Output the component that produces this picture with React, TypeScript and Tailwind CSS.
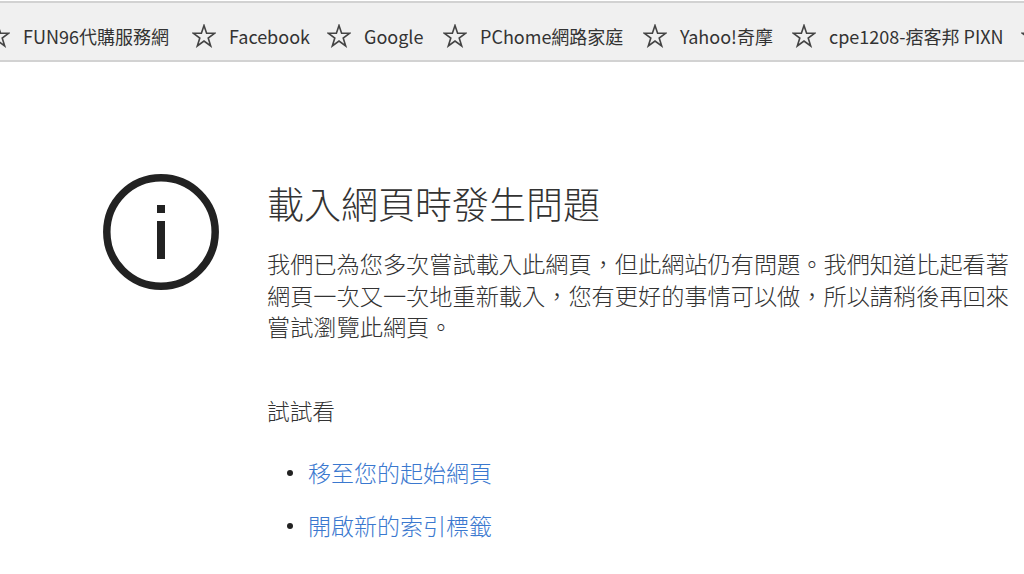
const bookmarks = [
  { label: 'FUN96代購服務網', width: 'w-[149px]' },
  { label: 'Facebook', width: 'w-[78px]' },
  { label: 'Google', width: 'w-[59px]' },
  { label: 'PChome網路家庭', width: 'w-[143px]' },
  { label: 'Yahoo!奇摩', width: 'w-[92px]' },
];

const cjk = 'font-["Noto_Sans_CJK_TC","Noto_Sans",sans-serif]';

function StarIcon() {
  return (
    <svg width="24" height="24" viewBox="0 0 24 24" className="shrink-0 text-[#444]" fill="none" stroke="currentColor" strokeWidth="1.6" strokeLinejoin="miter">
      <path d="M12 1.5 L14.6 9.2 L22.8 9.2 L16.2 14 L18.7 22 L12 17.1 L5.3 22 L7.8 14 L1.2 9.2 L9.4 9.2 Z" />
    </svg>
  );
}

function InfoIcon() {
  return (
    <svg width="116" height="116" viewBox="0 0 116 116" className="shrink-0">
      <circle cx="58" cy="58" r="54.2" fill="none" stroke="#222" strokeWidth="7.5" />
      <rect x="54" y="31" width="8" height="8" fill="#222" />
      <rect x="54" y="47" width="8" height="38" fill="#222" />
    </svg>
  );
}

export default function App() {
  return (
    <div className={`h-[574px] w-[1024px] overflow-hidden bg-white ${cjk}`}>
      {/* Bookmarks bar */}
      <div className="mt-px flex h-[61px] items-center gap-[18px] overflow-hidden border-t-2 border-b-2 border-[#d2d2d2] bg-[#f0f0f0] pt-[9px]">
        <div className="ml-[-14px] flex shrink-0 items-center gap-[20px]">
          {bookmarks.map((b) => (
            <div key={b.label} className="flex shrink-0 items-center gap-[13px]">
              <StarIcon />
              <span className={`${b.width} text-[18px] leading-6 whitespace-nowrap text-[#333]`}>{b.label}</span>
            </div>
          ))}
          <div className="flex shrink-0 items-center gap-[13px]">
            <StarIcon />
            <span className="w-[174px] overflow-hidden text-[18px] leading-6 whitespace-nowrap text-[#333]">cpe1208-痞客邦 PIXNET</span>
          </div>
        </div>
        <StarIcon />
      </div>

      {/* Error content */}
      <div className="flex items-start pt-[112px] pl-[103px]">
        <InfoIcon />
        <div className="ml-[48px] w-[750px] shrink-0 text-[#333]">
          <h1 className="pt-[4px] text-[37px] leading-[50px] font-light whitespace-nowrap">載入網頁時發生問題</h1>
          <p className="mt-[20px] text-[23.2px] leading-[31.5px] font-light">
            我們已為您多次嘗試載入此網頁，但此網站仍有問題。我們知道比起看著網頁一次又一次地重新載入，您有更好的事情可以做，所以請稍後再回來嘗試瀏覽此網頁。
          </p>
          <p className="mt-[52px] text-[22.7px] leading-[31.5px] font-light">試試看</p>
          <ul className="mt-[31px] flex flex-col gap-[22px]">
            <li className="flex items-center text-[23px] leading-[31px] font-light">
              <span className="ml-[20px] h-[6px] w-[6px] rounded-full bg-[#222]" />
              <a className="ml-[15px] text-[#3a78cf]">移至您的起始網頁</a>
            </li>
            <li className="flex items-center text-[23px] leading-[31px] font-light">
              <span className="ml-[20px] h-[6px] w-[6px] rounded-full bg-[#222]" />
              <a className="ml-[15px] text-[#3a78cf]">開啟新的索引標籤</a>
            </li>
          </ul>
        </div>
      </div>
    </div>
  );
}
